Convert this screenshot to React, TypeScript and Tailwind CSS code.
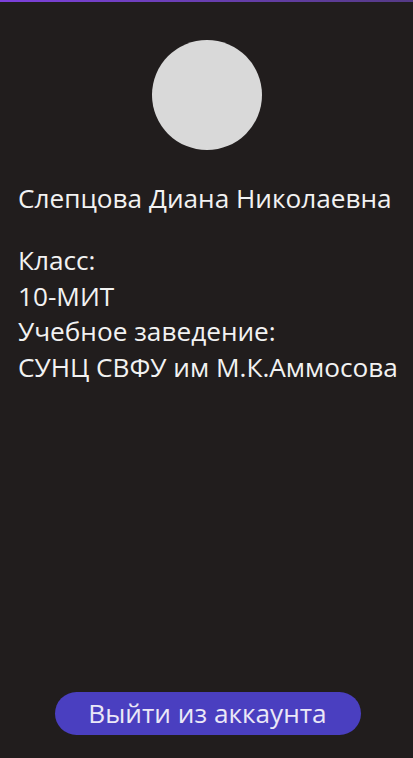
export default function App() {
  return (
    <div className="h-[758px] w-full bg-[#211d1d] flex flex-col font-['Open_Sans',sans-serif] text-[#f2f2f2] whitespace-nowrap">
      <div className="h-[2px] w-full bg-gradient-to-r from-[#7d40dc] to-[#553a86]" />
      <div className="mt-[38px] self-center w-[110px] h-[110px] rounded-full bg-[#d9d9d9]" />
      <div className="pl-[18px]">
        <p className="mt-[31px] text-[26.2px] leading-[34px]">Слепцова Диана Николаевна</p>
        <div className="mt-[28px] text-[26.2px] leading-[35.5px]">
          <p>Класс:</p>
          <p>10-МИТ</p>
          <p>Учебное заведение:</p>
          <p>СУНЦ СВФУ им М.К.Аммосова</p>
        </div>
      </div>
      <div className="mt-auto mb-[23px] flex justify-center pl-[2px]">
        <button className="w-[306px] h-[43px] rounded-full bg-[#4a3fc0] text-[26.2px] leading-[43px] text-[#ebe8f7]">
          Выйти из аккаунта
        </button>
      </div>
    </div>
  );
}
